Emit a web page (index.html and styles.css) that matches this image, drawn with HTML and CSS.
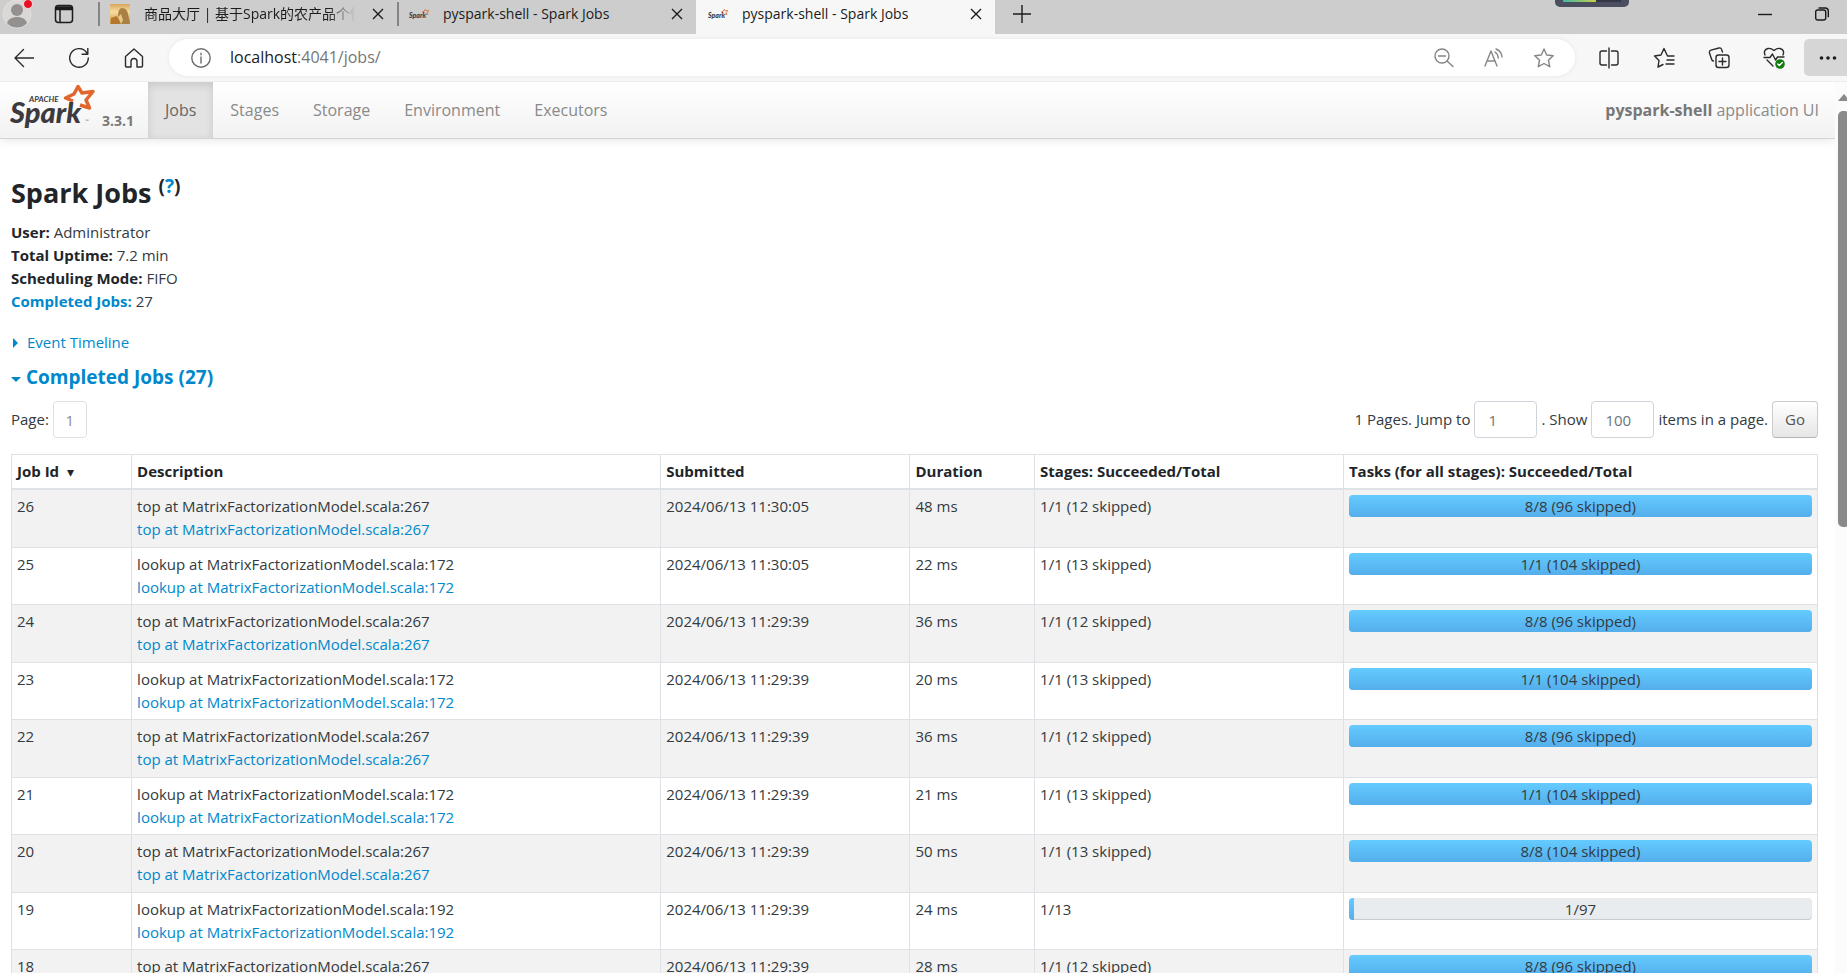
FILE: index.html
```html
<!DOCTYPE html>
<html lang="en">
<head>
    <meta charset="UTF-8">
    <meta name="viewport" content="width=device-width, initial-scale=1.0">
    <title>pyspark-shell - Spark Jobs</title>
    <link rel="stylesheet" href="styles.css">
</head>
<body>
    <!-- shared logo -->
    <svg class="defs" width="0" height="0" aria-hidden="true">
        <symbol id="spark-logo" viewBox="0 0 92 48">
            <path d="M63 19L55.500 16 64 12 68 4.500 72 11 83 9.500 76 18 79.500 26 70 23" fill="none" stroke="#e0662d" stroke-width="3.500" stroke-linejoin="round"/>
            <text class="logo-word" x="0" y="41">Spark</text>
        </symbol>
    </svg>

    <header class="tab-strip">
        <button class="avatar" aria-label="Profile">
            <svg width="32" height="30" viewBox="0 0 32 30">
                <circle cx="15" cy="14" r="14" fill="#dad8d6" stroke="#e2e0de"/>
                <circle cx="15" cy="10" r="6" fill="#93908e"/>
                <path d="M5 23c2-8 18-8 20 0-5 6-15 6-20 0z" fill="#93908e"/>
                <circle cx="26" cy="4" r="4.500" fill="#e81123" stroke="#f4dcdc"/>
            </svg>
        </button>
        <button class="tab-actions" aria-label="Tab actions">
            <svg width="20" height="20" viewBox="0 0 20 20" fill="none" stroke="#1b1b1b" stroke-width="1.500">
                <rect x="1.500" y="1.500" width="17" height="17" rx="3"/>
                <path d="M2 3.500h16M2 5h16" stroke-width="2.500"/>
                <path d="M6 6v12"/>
            </svg>
        </button>
        <div class="tab">
            <svg class="favicon" width="22" height="22" viewBox="0 0 22 22">
                <defs>
                    <linearGradient id="sky" x1="0" y1="0" x2="0" y2="1">
                        <stop offset="0" stop-color="#d9a75f"/>
                        <stop offset=".4" stop-color="#f7dda0"/>
                        <stop offset="1" stop-color="#c58a35"/>
                    </linearGradient>
                </defs>
                <rect width="20" height="20" y="1" fill="url(#sky)"/>
                <path d="M8 12q0-6 4-7 5 0 6 6l2 10H8z" fill="#a98145"/>
                <path d="M1 15l6-2 3 8H1z" fill="#b5772a"/>
                <path d="M8 14l3-3 2 6-2 4" fill="#e8c888"/>
            </svg>
            <span class="tab-title fade">商品大厅 | 基于Spark的农产品个性化</span>
            <button class="tab-close" aria-label="Close tab"><svg width="12" height="12" viewBox="0 0 12 12"><path d="M1 1l10 10M11 1L1 11"/></svg></button>
        </div>
        <div class="tab">
            <svg class="favicon" width="22" height="22"><use href="#spark-logo"/></svg>
            <span class="tab-title">pyspark-shell - Spark Jobs</span>
            <button class="tab-close" aria-label="Close tab"><svg width="12" height="12" viewBox="0 0 12 12"><path d="M1 1l10 10M11 1L1 11"/></svg></button>
        </div>
        <div class="tab active">
            <svg class="favicon" width="22" height="22"><use href="#spark-logo"/></svg>
            <span class="tab-title">pyspark-shell - Spark Jobs</span>
            <button class="tab-close" aria-label="Close tab"><svg width="12" height="12" viewBox="0 0 12 12"><path d="M1 1l10 10M11 1L1 11"/></svg></button>
        </div>
        <button class="new-tab" aria-label="New tab">
            <svg width="18" height="18" viewBox="0 0 18 18"><path d="M9 0v18M0 9h18"/></svg>
        </button>
        <div class="window-buttons">
            <button aria-label="Minimize"><svg width="14" height="14" viewBox="0 0 14 14"><path d="M0 7.500h14"/></svg></button>
            <button aria-label="Restore"><svg width="14" height="14" viewBox="0 0 14 14"><rect x=".7" y="3" width="10" height="10" rx="2"/><path d="M3.500 1h6.500q3.300 0 3.300 3.300v6"/></svg></button>
        </div>
        <div class="level-meter"></div>
    </header>

    <div class="toolbar">
        <button aria-label="Back"><svg width="20" height="20" viewBox="0 0 20 20"><path d="M20 10H1M9.500 1.500L1 10l8.500 8.500"/></svg></button>
        <button aria-label="Refresh"><svg width="20" height="20" viewBox="0 0 20 20"><path d="M19.300 10a9.300 9.300 0 1 1-2-5.800L18.500 5.700M18.800 0.500v5.700h-5.700"/></svg></button>
        <button aria-label="Home"><svg width="20" height="20" viewBox="0 0 20 20"><path d="M1.500 8.500L10 1l8.500 7.500V18q0 1-1 1H13v-5.500a3 3 0 0 0-6 0V19H2.500q-1 0-1-1z"/></svg></button>
        <div class="address-bar">
            <svg width="20" height="20" viewBox="0 0 20 20" stroke="#6b6b6b"><circle cx="10" cy="10" r="9.200"/><path d="M10 9v6M10 5.200v1.600"/></svg>
            <div class="url"><b>localhost</b>:4041/jobs/</div>
            <button aria-label="Zoom out"><svg width="20" height="20" viewBox="0 0 20 20"><circle cx="8" cy="8" r="7"/><path d="M4.500 8h7M13 13l6 5.500"/></svg></button>
            <button aria-label="Read aloud"><svg width="20" height="20" viewBox="0 0 20 20"><path d="M1 18L7 3l6 15M3 13h8M11 4q3 2 3.300 6M12 1q5.500 2 6 8"/></svg></button>
            <button aria-label="Add to favorites"><svg width="20" height="20" viewBox="0 0 20 20"><path d="M10 1l2.700 6 6.500.7-4.800 4.500 1.400 6.500L10 15.500l-5.800 3.200 1.400-6.500L.8 7.700 7.300 7z"/></svg></button>
        </div>
        <div class="extensions">
            <button aria-label="Split screen"><svg width="22" height="22" viewBox="0 0 22 22"><path d="M11 1v20M8.500 4H4Q2 4 2 6v10q0 2 2 2h4.500M13.500 4H18q2 0 2 2v10q0 2-2 2h-4.500"/></svg></button>
            <button aria-label="Favorites"><svg width="22" height="22" viewBox="0 0 22 22"><path d="M21 9h-6.500L11 1.500 8 8 1.500 9 6 13.500 5 20l5-2.500M14 13h7M13 17h8"/></svg></button>
            <button aria-label="Collections"><svg width="22" height="22" viewBox="0 0 22 22"><rect x="8" y="8" width="13" height="12.500" rx="2.500"/><path d="M14.500 11v7M11 14.500h7M5.500 14Q4 14 3.500 12L1.500 6q-.5-2 1.500-2.800L11 1q2-.5 2.600 1.400L14.500 5"/></svg></button>
            <button aria-label="Browser essentials"><svg width="22" height="22" viewBox="0 0 22 22"><path d="M2 8Q0 3 5 1.500q3-.5 6 2 3-2.500 6-2 5 1.500 3 6.500M1 10.500h6L9.500 7l3 6 2-3H21M4 13l6 6"/><circle cx="17" cy="17" r="4.800" fill="#107c10" stroke="none"/><path d="M14.800 17l1.500 1.500 3-3" stroke="#fff"/></svg></button>
        </div>
        <button class="more" aria-label="Settings and more"><svg width="18" height="6" viewBox="0 0 18 6"><circle cx="2.500" cy="3" r="1.800"/><circle cx="9" cy="3" r="1.800"/><circle cx="15.500" cy="3" r="1.800"/></svg></button>
    </div>

    <div class="viewport">
        <div class="page">
            <nav class="navbar">
                <a class="brand" href="#">
                    <svg width="92" height="48" viewBox="0 0 92 48" role="img" aria-label="Apache Spark">
                        <use href="#spark-logo"/>
                        <text class="logo-apache" x="19" y="20">APACHE</text>
                        <text class="logo-tm" x="75" y="41">™</text>
                    </svg>
                    <span class="version">3.3.1</span>
                </a>
                <a class="nav-link active" href="#">Jobs</a>
                <a class="nav-link" href="#">Stages</a>
                <a class="nav-link" href="#">Storage</a>
                <a class="nav-link" href="#">Environment</a>
                <a class="nav-link" href="#">Executors</a>
                <span class="navbar-text"><strong>pyspark-shell</strong> application UI</span>
            </nav>

            <main class="container">
                <h3>Spark Jobs <sup>(<a href="#">?</a>)</sup></h3>
                <ul class="summary">
                    <li><strong>User:</strong> Administrator</li>
                    <li><strong>Total Uptime:</strong> 7.2 min</li>
                    <li><strong>Scheduling Mode:</strong> FIFO</li>
                    <li><a href="#completed"><strong>Completed Jobs:</strong></a> 27</li>
                </ul>
                <a class="expand" href="#"><span class="arrow closed"></span>Event Timeline</a>
                <h4 id="completed"><a href="#"><span class="arrow open"></span>Completed Jobs (27)</a></h4>

                <div class="pagination">
                    <span>Page:</span>
                    <a class="page-link" href="#">1</a>
                    <form class="page-form">
                        <label for="page-no">1 Pages. Jump to</label>
                        <input type="text" id="page-no" value="1">
                        <label for="page-size">. Show</label>
                        <input type="text" id="page-size" value="100">
                        <label for="page-size">items in a page.</label>
                        <button type="button">Go</button>
                    </form>
                </div>

                <table>
                    <colgroup>
                        <col class="col-id">
                        <col class="col-description">
                        <col class="col-submitted">
                        <col class="col-duration">
                        <col class="col-stages">
                        <col class="col-tasks">
                    </colgroup>
                    <thead>
                        <tr>
                            <th>Job Id <span class="sort">▾</span></th>
                            <th>Description</th>
                            <th>Submitted</th>
                            <th>Duration</th>
                            <th>Stages: Succeeded/Total</th>
                            <th>Tasks (for all stages): Succeeded/Total</th>
                        </tr>
                    </thead>
                    <tbody>
                        <tr>
                            <td>26</td>
                            <td>top at MatrixFactorizationModel.scala:267<br><a href="#">top at MatrixFactorizationModel.scala:267</a></td>
                            <td>2024/06/13 11:30:05</td>
                            <td>48 ms</td>
                            <td>1/1 (12 skipped)</td>
                            <td><div class="progress"><div class="bar" style="width: 100%"></div><span>8/8 (96 skipped)</span></div></td>
                        </tr>
                        <tr>
                            <td>25</td>
                            <td>lookup at MatrixFactorizationModel.scala:172<br><a href="#">lookup at MatrixFactorizationModel.scala:172</a></td>
                            <td>2024/06/13 11:30:05</td>
                            <td>22 ms</td>
                            <td>1/1 (13 skipped)</td>
                            <td><div class="progress"><div class="bar" style="width: 100%"></div><span>1/1 (104 skipped)</span></div></td>
                        </tr>
                        <tr>
                            <td>24</td>
                            <td>top at MatrixFactorizationModel.scala:267<br><a href="#">top at MatrixFactorizationModel.scala:267</a></td>
                            <td>2024/06/13 11:29:39</td>
                            <td>36 ms</td>
                            <td>1/1 (12 skipped)</td>
                            <td><div class="progress"><div class="bar" style="width: 100%"></div><span>8/8 (96 skipped)</span></div></td>
                        </tr>
                        <tr>
                            <td>23</td>
                            <td>lookup at MatrixFactorizationModel.scala:172<br><a href="#">lookup at MatrixFactorizationModel.scala:172</a></td>
                            <td>2024/06/13 11:29:39</td>
                            <td>20 ms</td>
                            <td>1/1 (13 skipped)</td>
                            <td><div class="progress"><div class="bar" style="width: 100%"></div><span>1/1 (104 skipped)</span></div></td>
                        </tr>
                        <tr>
                            <td>22</td>
                            <td>top at MatrixFactorizationModel.scala:267<br><a href="#">top at MatrixFactorizationModel.scala:267</a></td>
                            <td>2024/06/13 11:29:39</td>
                            <td>36 ms</td>
                            <td>1/1 (12 skipped)</td>
                            <td><div class="progress"><div class="bar" style="width: 100%"></div><span>8/8 (96 skipped)</span></div></td>
                        </tr>
                        <tr>
                            <td>21</td>
                            <td>lookup at MatrixFactorizationModel.scala:172<br><a href="#">lookup at MatrixFactorizationModel.scala:172</a></td>
                            <td>2024/06/13 11:29:39</td>
                            <td>21 ms</td>
                            <td>1/1 (13 skipped)</td>
                            <td><div class="progress"><div class="bar" style="width: 100%"></div><span>1/1 (104 skipped)</span></div></td>
                        </tr>
                        <tr>
                            <td>20</td>
                            <td>top at MatrixFactorizationModel.scala:267<br><a href="#">top at MatrixFactorizationModel.scala:267</a></td>
                            <td>2024/06/13 11:29:39</td>
                            <td>50 ms</td>
                            <td>1/1 (13 skipped)</td>
                            <td><div class="progress"><div class="bar" style="width: 100%"></div><span>8/8 (104 skipped)</span></div></td>
                        </tr>
                        <tr>
                            <td>19</td>
                            <td>lookup at MatrixFactorizationModel.scala:192<br><a href="#">lookup at MatrixFactorizationModel.scala:192</a></td>
                            <td>2024/06/13 11:29:39</td>
                            <td>24 ms</td>
                            <td>1/13</td>
                            <td><div class="progress"><div class="bar" style="width: 1%"></div><span>1/97</span></div></td>
                        </tr>
                        <tr>
                            <td>18</td>
                            <td>top at MatrixFactorizationModel.scala:267<br><a href="#">top at MatrixFactorizationModel.scala:267</a></td>
                            <td>2024/06/13 11:29:39</td>
                            <td>28 ms</td>
                            <td>1/1 (12 skipped)</td>
                            <td><div class="progress"><div class="bar" style="width: 100%"></div><span>8/8 (96 skipped)</span></div></td>
                        </tr>
                    </tbody>
                </table>
            </main>
        </div>
        <div class="scrollbar">
            <div class="scroll-up"></div>
            <div class="scroll-thumb"></div>
        </div>
    </div>
</body>
</html>
```
FILE: styles.css
```css
* {
    box-sizing: border-box;
}
body {
    margin: 0;
    height: 100vh;
    display: flex;
    flex-direction: column;
    overflow: hidden;
    background: #f7f7f7;
    color: #333a40;
    font-family: "Open Sans", "Noto Sans CJK SC", sans-serif;
    font-size: 15px;
    line-height: 23px;
}
a {
    color: #0088cc;
    text-decoration: none;
}
button {
    padding: 0;
    border: none;
    background: none;
    font: inherit;
}
svg {
    display: block;
}
.defs {
    position: absolute;
}

/* logo */
symbol {
    overflow: visible;
}
.logo-word {
    font: italic 900 29px Lato, sans-serif;
    fill: #3c3a3e;
}
.logo-apache {
    font: italic 700 8px Lato, sans-serif;
    fill: #3c3a3e;
}
.logo-tm {
    font: 5px Lato, sans-serif;
    fill: #777;
}

/* tab strip */
.tab-strip {
    position: relative;
    flex: none;
    display: flex;
    height: 34px;
    background: #cdcdcd;
}
.avatar {
    width: 34px;
    height: 30px;
    padding-left: 2px;
}
.tab-actions {
    width: 64px;
    height: 28px;
    padding-left: 20px;
}
.tab {
    flex: 0 1 299px;
    min-width: 0;
    height: 34px;
    display: flex;
    align-items: center;
    gap: 12px;
    padding: 0 13px 7px 12px;
    background: linear-gradient(#858585, #858585) 0 2px / 2px 24px no-repeat;
}
.tab.active {
    background: #f7f7f7;
}
.favicon {
    flex: none;
    overflow: visible;
}
.tab-title {
    flex: 1;
    min-width: 0;
    overflow: hidden;
    white-space: nowrap;
    color: #1b1b1b;
    font-size: 14px;
}
.tab-title.fade {
    -webkit-mask-image: linear-gradient(90deg, #000 85%, transparent 98%);
    mask-image: linear-gradient(90deg, #000 85%, transparent 98%);
}
.tab-close svg, .new-tab svg, .window-buttons svg {
    fill: none;
    stroke: #1b1b1b;
    stroke-width: 1.4;
}
.new-tab {
    height: 27px;
    padding: 0 18px;
}
.window-buttons {
    margin-left: auto;
    display: flex;
    gap: 43px;
    height: 27px;
    padding-right: 18px;
}
.level-meter {
    position: absolute;
    top: 0;
    right: 218px;
    width: 74px;
    height: 7px;
    border-radius: 0 0 5px 5px;
    background: linear-gradient(90deg, #3fb8a5, #c9cf4a 56%, #333645 57%) 8px 0 / 58px 2px no-repeat, #4b4e60;
}

/* toolbar */
.toolbar {
    flex: none;
    display: flex;
    align-items: center;
    gap: 35px;
    height: 48px;
    padding-left: 14px;
    border-bottom: 1px solid #ededed;
}
.toolbar svg {
    fill: none;
    stroke-width: 1.4;
    stroke-linejoin: round;
    stroke-linecap: round;
}
.toolbar button svg {
    stroke: #2b2b2b;
}
.address-bar {
    flex: 1;
    display: flex;
    align-items: center;
    gap: 30px;
    height: 37px;
    margin-left: -10px;
    padding: 0 21px 0 22px;
    border-radius: 19px;
    background: #fff;
    box-shadow: 0 0 4px #e6e6e6;
}
.address-bar button svg {
    stroke: #858585;
}
.url {
    flex: 1;
    margin-left: -11px;
    color: #767676;
    font-size: 16px;
}
.url b {
    color: #1b1b1b;
    font-weight: 400;
}
.extensions {
    display: flex;
    gap: 33px;
    margin-left: -12px;
}
.toolbar .more {
    width: 43px;
    height: 37px;
    margin-left: -16px;
    padding-left: 15px;
    border-radius: 5px 0 0 5px;
    background: #d6d6d6;
}
.toolbar .more svg {
    fill: #1b1b1b;
    stroke: none;
}

/* page */
.viewport {
    flex: 1;
    min-height: 0;
    display: flex;
    background: #fff;
}
.page {
    flex: 1;
    overflow: hidden;
}
.navbar {
    display: flex;
    height: 57px;
    padding: 0 16px 0 10px;
    border-bottom: 1px solid #d4d4d4;
    background: linear-gradient(#fff, #f2f2f2);
    box-shadow: 0 1px 10px rgba(0, 0, 0, 0.1);
    font-size: 16px;
    line-height: 56px;
}
.brand {
    display: flex;
    width: 138px;
}
.version {
    padding-top: 11px;
    color: #777;
    font-size: 14px;
    font-weight: 700;
}
.nav-link {
    padding: 0 17px;
    color: #8a8a8a;
}
.nav-link.active {
    background: #e3e3e3;
    box-shadow: inset 0 3px 8px rgba(0, 0, 0, 0.12);
    color: #666;
}
.navbar-text {
    margin-left: auto;
    color: #8a8a8a;
}
.navbar-text strong {
    color: #777;
}
.container {
    padding: 34px 17px 0 11px;
}
h3 {
    margin: 0 0 8px;
    color: #212529;
    font-size: 27px;
    font-weight: 700;
    line-height: 40px;
}
sup {
    font-size: 19px;
    line-height: 0;
}
strong {
    color: #212529;
}
a strong {
    color: #0088cc;
}
.summary {
    margin: 0 0 18px;
    padding: 0;
    list-style: none;
}
.expand {
    display: flex;
    align-items: center;
}
.arrow {
    display: inline-block;
    margin-left: 2px;
}
.arrow.closed {
    margin-right: 9px;
    border: 5px solid transparent;
    border-left-color: #0088cc;
    border-right: 0;
}
.arrow.open {
    margin: 4px 5px 0 0;
    border: 5px solid transparent;
    border-top-color: #0088cc;
    border-bottom: 0;
}
h4 {
    margin: 10px 0 11px;
    font-size: 19px;
    line-height: 26px;
}
h4 a {
    display: flex;
    align-items: center;
}
.pagination {
    display: flex;
    align-items: center;
    height: 37px;
    margin-bottom: 16px;
}
.page-link {
    width: 34px;
    height: 37px;
    margin-left: 4px;
    border: 1px solid #dee2e6;
    border-radius: 4px;
    color: #8a8a8a;
    line-height: 37px;
    text-align: center;
}
.page-form {
    display: flex;
    align-items: center;
    gap: 4px;
    margin-left: auto;
}
.page-form input {
    width: 63px;
    height: 37px;
    padding: 0 13px;
    border: 1px solid #ced4da;
    border-radius: 4px;
    color: #6c757d;
    font: inherit;
}
.page-form button {
    width: 46px;
    height: 37px;
    border: 1px solid #ccc;
    border-bottom-color: #b3b3b3;
    border-radius: 4px;
    background: linear-gradient(#fff, #e6e6e6);
    color: #555;
}

/* jobs table */
table {
    width: 100%;
    table-layout: fixed;
    border-collapse: collapse;
}
.col-id { width: 6.65%; }
.col-description { width: 29.3%; }
.col-submitted { width: 13.8%; }
.col-duration { width: 6.9%; }
.col-stages { width: 17.1%; }
th, td {
    padding: 5px;
    border: 1px solid #dee2e6;
    text-align: left;
    vertical-align: top;
    white-space: nowrap;
}
th {
    border-bottom-width: 2px;
    color: #212529;
}
.sort {
    margin-left: 4px;
    font-family: "DejaVu Sans", sans-serif;
    font-size: 14px;
    line-height: 1;
}
tbody tr {
    height: 57px;
}
tbody tr:nth-child(odd) {
    height: 58px;
    background: #f2f2f2;
}
.progress {
    position: relative;
    height: 22px;
    overflow: hidden;
    border-radius: 4px;
    background: #e9ecef;
    box-shadow: inset 0 -1px 1px rgba(0, 0, 0, 0.15);
}
.progress .bar {
    height: 100%;
    background: linear-gradient(#64cbff, #54aeeb);
}
.progress span {
    position: absolute;
    inset: 0;
    text-align: center;
}

/* scrollbar */
.scrollbar {
    width: 12px;
    padding: 12px 0 0 3px;
    overflow: hidden;
    background: #fbfbfb;
}
.scroll-up {
    width: 12px;
    border: 6px solid transparent;
    border-top: 0;
    border-bottom: 7px solid #8a8a8a;
}
.scroll-thumb {
    width: 12px;
    height: 416px;
    margin-top: 10px;
    border-radius: 5px;
    background: #8a8a8a;
}
```
